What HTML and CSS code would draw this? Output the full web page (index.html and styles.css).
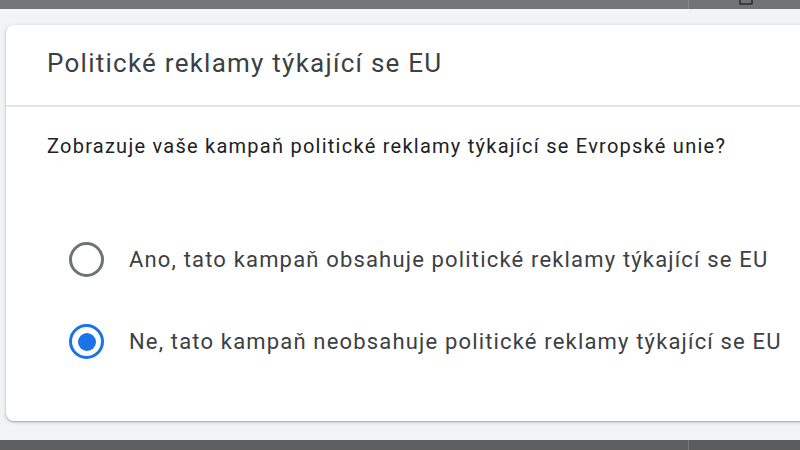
FILE: index.html
```html
<!DOCTYPE html>
<html lang="cs">
<head>
  <meta charset="UTF-8">
  <title>Politické reklamy týkající se EU</title>
  <link rel="stylesheet" href="styles.css">
</head>
<body>

  <!-- horní lišta -->
  <div class="topbar">
    <div class="topbar-main"></div>
    <div class="topbar-side"><span class="topbar-icon"></span></div>
  </div>

  <div class="page">
    <section class="card">
      <header class="card-head">
        <h2>Politické reklamy týkající se EU</h2>
      </header>

      <div class="card-body">
        <p class="question">Zobrazuje vaše kampaň politické reklamy týkající se Evropské unie?</p>

        <div class="options">
          <label class="option">
            <input type="radio" name="eu" value="yes">
            <span class="radio"></span>
            <span class="label-text">Ano, tato kampaň obsahuje politické reklamy týkající se EU</span>
          </label>
          <label class="option">
            <input type="radio" name="eu" value="no" checked>
            <span class="radio"></span>
            <span class="label-text">Ne, tato kampaň neobsahuje politické reklamy týkající se EU</span>
          </label>
        </div>
      </div>
    </section>
  </div>

  <div class="bottombar">
    <div class="bottombar-main"></div>
    <div class="bottombar-side"></div>
  </div>

</body>
</html>
```

FILE: styles.css
```css
/* リセット */
*, *::before, *::after { margin:0; padding:0; box-sizing:border-box; }
html, body { width:100%; height:100%; overflow:hidden; }
body {
  background:#f1f3f4;
  font-family:Roboto,'Noto Sans',sans-serif;
  display:flex; flex-direction:column;
}

/* 上のバー */
.topbar { display:flex; height:9px; flex-shrink:0; }
.topbar-main { flex:1; background:#767676; }
.topbar-side {
  width:112px; background:#727272;
  border-left:1px solid #868686;
  position:relative;
}
.topbar-icon {
  position:absolute; left:50px; top:-6px;
  width:14px; height:11px;
  border:2px solid #3c3c3c; border-radius:1px;
}

/* 中央のカード */
.page { flex:1; padding:16px 0 19px 6px; }
.card {
  width:820px; height:396px;
  background:#fff;
  border-radius:8px 0 0 8px;
  box-shadow:0 1px 2px rgba(60,64,67,0.35), 0 1px 4px rgba(60,64,67,0.15);
  display:flex; flex-direction:column;
}
.card-head {
  height:82px;
  padding:23px 0 0 41px;
  border-bottom:2px solid #e3e4e6;
}
.card-head h2 {
  font-size:26px; line-height:30px; font-weight:400; color:#3c4043;
  letter-spacing:1.25px;
}

.card-body { padding:27px 0 0 41px; }
.question {
  font-size:20px; line-height:24px; color:#202124;
  letter-spacing:1.25px;
}

/* ラジオボタン */
.options {
  display:flex; flex-direction:column; gap:47px;
  margin-top:84px; padding-left:22px;
}
.option { display:flex; align-items:center; cursor:pointer; }
.option input { display:none; }
.radio {
  width:35px; height:35px; border-radius:50%;
  border:3px solid #6f7276;
  display:flex; align-items:center; justify-content:center;
  flex-shrink:0;
}
.option input:checked + .radio { border-color:#1a73e8; }
.option input:checked + .radio::after {
  content:''; width:18px; height:18px; border-radius:50%;
  background:#1a73e8;
}
.label-text {
  margin-left:25px;
  font-size:22px; line-height:26px; color:#3c4043;
  letter-spacing:1.17px;
}

/* 下のバー */
.bottombar { display:flex; height:10px; flex-shrink:0; }
.bottombar-main { flex:1; background:#5f5f5f; }
.bottombar-side { width:112px; background:#5c5c5c; border-left:1px solid #777; }
```
